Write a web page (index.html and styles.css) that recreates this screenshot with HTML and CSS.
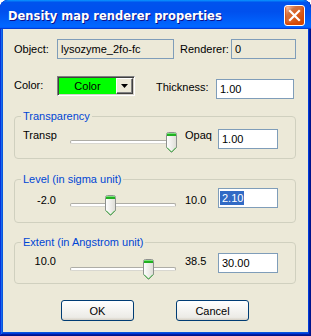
FILE: index.html
```html
<!DOCTYPE html>
<html>
<head>
<meta charset="utf-8">
<title>Density map renderer properties</title>
<link rel="stylesheet" href="styles.css">
</head>
<body>
<div class="window">
  <div class="titlebar">
    <span class="title">Density map renderer properties</span>
    <span class="close">
      <svg width="19" height="19" viewBox="0 0 19 19"><path d="M5 5 L14 14 M14 5 L5 14" stroke="#fff" stroke-width="2.2" stroke-linecap="square"/></svg>
    </span>
  </div>
  <div class="client">
    <div class="row row-object">
      <span class="lbl lbl-first">Object:</span>
      <span class="field ro field-object"><span class="txt">lysozyme_2fo-fc</span></span>
      <span class="lbl lbl-renderer">Renderer:</span>
      <span class="field ro field-renderer"><span class="txt">0</span></span>
    </div>
    <div class="row row-color">
      <span class="lbl lbl-first lbl-color">Color:</span>
      <span class="combo">
        <span class="combo-val">Color</span>
        <span class="combo-btn"><svg width="7" height="4" viewBox="0 0 7 4"><path d="M0 0 H7 L3.5 4 Z" fill="#000"/></svg></span>
      </span>
      <span class="lbl lbl-thick">Thickness:</span>
      <span class="field field-thick"><span class="txt">1.00</span></span>
    </div>

    <fieldset class="group g1">
      <legend>Transparency</legend>
      <div class="grow">
        <span class="cell-l">Transp</span>
        <div class="slider">
          <div class="track"></div>
          <svg class="thumb" style="left:96px" width="11" height="21" viewBox="0 0 11 21">
            <defs><linearGradient id="tg1" x1="0" x2="1" y1="0" y2="0"><stop offset="0" stop-color="#FFFFFF"/><stop offset="1" stop-color="#DEDDD6"/></linearGradient></defs>
            <path d="M0.5 2.5 Q0.5 0.5 2.5 0.5 H8.5 Q10.5 0.5 10.5 2.5 V15.5 L5.5 20.5 L0.5 15.5 Z" fill="url(#tg1)" stroke="#8E918E"/>
            <rect x="1" y="1" width="9" height="1" fill="#7BE07B"/>
            <rect x="1" y="2" width="9" height="2" fill="#21B021"/>
            <path d="M1 15.5 L5.5 20 L10 15.5" fill="none" stroke="#3CB43C"/>
          </svg>
        </div>
        <span class="cell-r">Opaq</span>
        <span class="field field-val"><span class="txt">1.00</span></span>
      </div>
    </fieldset>

    <fieldset class="group g2">
      <legend>Level (in sigma unit)</legend>
      <div class="grow">
        <span class="cell-l num">-2.0</span>
        <div class="slider">
          <div class="track"></div>
          <svg class="thumb" style="left:35px" width="11" height="21" viewBox="0 0 11 21">
            <defs><linearGradient id="tg2" x1="0" x2="1" y1="0" y2="0"><stop offset="0" stop-color="#FFFFFF"/><stop offset="1" stop-color="#DEDDD6"/></linearGradient></defs>
            <path d="M0.5 2.5 Q0.5 0.5 2.5 0.5 H8.5 Q10.5 0.5 10.5 2.5 V15.5 L5.5 20.5 L0.5 15.5 Z" fill="url(#tg2)" stroke="#8E918E"/>
            <rect x="1" y="1" width="9" height="1" fill="#7BE07B"/>
            <rect x="1" y="2" width="9" height="2" fill="#21B021"/>
            <path d="M1 15.5 L5.5 20 L10 15.5" fill="none" stroke="#3CB43C"/>
          </svg>
        </div>
        <span class="cell-r">10.0</span>
        <span class="field field-val"><span class="txt sel">2.10</span></span>
      </div>
    </fieldset>

    <fieldset class="group g3">
      <legend>Extent (in Angstrom unit)</legend>
      <div class="grow">
        <span class="cell-l num">10.0</span>
        <div class="slider">
          <div class="track"></div>
          <svg class="thumb" style="left:73px" width="11" height="21" viewBox="0 0 11 21">
            <defs><linearGradient id="tg3" x1="0" x2="1" y1="0" y2="0"><stop offset="0" stop-color="#FFFFFF"/><stop offset="1" stop-color="#DEDDD6"/></linearGradient></defs>
            <path d="M0.5 2.5 Q0.5 0.5 2.5 0.5 H8.5 Q10.5 0.5 10.5 2.5 V15.5 L5.5 20.5 L0.5 15.5 Z" fill="url(#tg3)" stroke="#8E918E"/>
            <rect x="1" y="1" width="9" height="1" fill="#7BE07B"/>
            <rect x="1" y="2" width="9" height="2" fill="#21B021"/>
            <path d="M1 15.5 L5.5 20 L10 15.5" fill="none" stroke="#3CB43C"/>
          </svg>
        </div>
        <span class="cell-r">38.5</span>
        <span class="field field-val"><span class="txt">30.00</span></span>
      </div>
    </fieldset>

    <div class="buttons">
      <button class="btn">OK</button>
      <button class="btn">Cancel</button>
    </div>
  </div>
</div>
</body>
</html>
```

FILE: styles.css
```css
* { box-sizing: border-box; }
html, body { margin: 0; padding: 0; background: #ffffff; }
body {
  font-family: "Liberation Sans", Arial, sans-serif;
  font-size: 11px;
  color: #000;
}

.window {
  width: 311px;
  height: 336px;
  display: flex;
  flex-direction: column;
  border-radius: 8px 8px 0 0;
  overflow: hidden;
  background: #0855dd;
  box-shadow: inset -1px -1px #00138c, inset 1px 1px #0831d9,
              inset -2px -2px #001ea0, inset 2px 2px #166aee,
              inset -3px -3px #003bda, inset 3px 3px #0855dd;
}

.titlebar {
  height: 29px;
  flex: none;
  display: flex;
  align-items: flex-start;
  padding: 0 6px 0 8px;
  border-radius: 8px 8px 0 0;
  background: linear-gradient(180deg, #0997ff, #0053ee 8%, #0050ee 40%, #06f 88%, #06f 93%, #005bff 95%, #003dd7 96%, #003dd7);
}
.title {
  margin-top: 10px;
  line-height: 13px;
  font-family: "DejaVu Sans", sans-serif;
  font-weight: bold;
  font-size: 11.5px;
  color: #fff;
  text-shadow: 1px 1px #0f1089;
  white-space: nowrap;
}
.close {
  margin-left: auto;
  margin-top: 5px;
  width: 21px;
  height: 21px;
  border: 1px solid #fff;
  border-radius: 3px;
  background: radial-gradient(circle at 90% 90%, #cc4600 0%, #dc6527 55%, #cd7546 70%, #ffccb2 90%, #fff 100%);
  box-shadow: inset 0 -1px 2px 1px #da4600;
  display: flex;
}

.client {
  flex: 1;
  margin: 0 3px 4px 3px;
  background: #ece9d8;
  padding: 10px 12px 0 11px;
  display: flex;
  flex-direction: column;
}

.row { display: flex; align-items: flex-start; }
.row-object { height: 20px; }
.row-color { height: 23px; margin-top: 17px; }

.lbl { line-height: 20px; white-space: nowrap; }
.lbl-first { width: 43px; flex: none; }
.lbl-color { margin-top: -1px; }
.lbl-renderer { width: 51px; margin-left: 6px; flex: none; }
.lbl-thick { width: 60px; margin-left: 21px; margin-top: 2px; flex: none; line-height: 18px; }

.field {
  height: 20px;
  border: 1px solid #7f9db9;
  background: #fff;
  display: flex;
  align-items: center;
  padding-left: 1px;
  flex: none;
  overflow: hidden;
  white-space: nowrap;
}
.field.ro { background: #ece9d8; }
.txt { line-height: 14px; padding: 0 1px 0 2px; }
.txt.sel { background: #316ac5; color: #fff; }
.field-object { width: 117px; }
.field-renderer { width: 65px; }
.field-thick { width: 78px; margin-top: 3px; }

.combo {
  width: 78px;
  height: 20px;
  flex: none;
  display: flex;
  border: 1px solid;
  border-color: #808080 #ffffff #ffffff #808080;
  box-shadow: inset 1px 1px #404040, inset -1px -1px #d4d0c8;
  padding: 1px;
}
.combo-val {
  flex: 1;
  background: #00ff00;
  text-align: center;
  line-height: 16px;
}
.combo-btn {
  width: 17px;
  flex: none;
  background: #ece9d8;
  border: 1px solid;
  border-color: #ffffff #404040 #404040 #ffffff;
  box-shadow: inset -1px -1px #808080;
  display: flex;
  align-items: center;
  justify-content: center;
}

.group {
  margin: 0;
  padding: 0;
  min-width: 0;
  border: 1px solid #d0d0bf;
  border-radius: 4px;
}
.group legend {
  margin-left: 6px;
  padding: 0 2px;
  line-height: 13px;
  color: #0046d5;
}
.g1 { margin-top: 11px; --h: 35px; --lbl: 6px; --thumb: 9px; --fld: 6px; }
.g2 { margin-top: 14px; --h: 36px; --lbl: 8px; --thumb: 9px; --fld: 2px; }
.g3 { margin-top: 13px; --h: 34px; --lbl: 6px; --thumb: 10px; --fld: 4px; }

.grow {
  display: flex;
  align-items: flex-start;
  height: var(--h);
}
.cell-l {
  width: 55px;
  flex: none;
  padding-left: 8px;
  line-height: 13px;
  margin-top: var(--lbl);
  white-space: nowrap;
}
.cell-l.num { text-align: right; padding: 0 14px 0 0; }
.slider {
  position: relative;
  width: 106px;
  height: 21px;
  flex: none;
  margin-top: var(--thumb);
}
.track {
  margin-top: 8px;
  height: 4px;
  border: 1px solid #aeada6;
  border-bottom-color: #d8d7d0;
  border-radius: 2px;
  background: #fff;
}
.thumb { position: absolute; top: 0; display: block; }
.cell-r {
  width: 33px;
  margin-left: 9px;
  flex: none;
  line-height: 13px;
  margin-top: var(--lbl);
}
.field-val { width: 60px; margin-top: var(--fld); }

.buttons {
  display: flex;
  justify-content: center;
  gap: 42px;
  margin-top: 16px;
}
.btn {
  width: 73px;
  height: 21px;
  padding: 0;
  font-family: "Liberation Sans", Arial, sans-serif;
  font-size: 11px;
  color: #000;
  border: 1px solid #003c74;
  border-radius: 3px;
  background: linear-gradient(180deg, #fff, #ecebe6 86%, #d6d0c5);
}
```
